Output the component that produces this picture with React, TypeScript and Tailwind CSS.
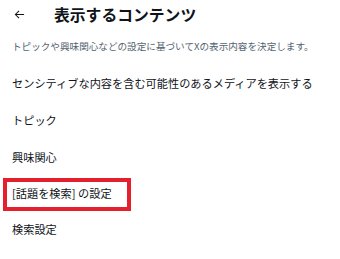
import React from "react";

const font = { fontFamily: '"Noto Sans CJK JP", "Noto Sans", sans-serif' };

export default function App() {
  const items = ["センシティブな内容を含む可能性のあるメディアを表示する", "トピック", "興味関心"];
  return (
    <div className="w-[340px] h-[259px] bg-white overflow-hidden text-[#0f1419]" style={font}>
      <div className="h-[29px] flex items-center">
        <svg className="ml-[14px] w-[11px] h-[11px]" viewBox="0 0 24 24" fill="none" stroke="#0f1419" strokeWidth="2.2">
          <path d="M22 12H3M11 4l-8 8 8 8" />
        </svg>
        <span className="ml-[29px] text-[15.8px] font-bold leading-none tracking-[0px]">表示するコンテンツ</span>
      </div>
      <div className="h-[36px] flex items-center pl-[12px] text-[9.6px] text-[#536471] leading-none">
        トピックや興味関心などの設定に基づいてXの表示内容を決定します。
      </div>
      {items.map((t) => (
        <div key={t} className="h-[37px] flex items-center pl-[12px] text-[11.2px] leading-none">
          {t}
        </div>
      ))}
      <div className="h-[36px] flex items-center">
        <div className="ml-[3px] w-[128px] h-[33px] border-4 border-[#e3202c] flex items-center pl-[5px] text-[11.2px] leading-none">
          [話題を検索] の設定
        </div>
      </div>
      <div className="h-[35px] flex items-center pl-[12px] text-[11.2px] leading-none">検索設定</div>
    </div>
  );
}
